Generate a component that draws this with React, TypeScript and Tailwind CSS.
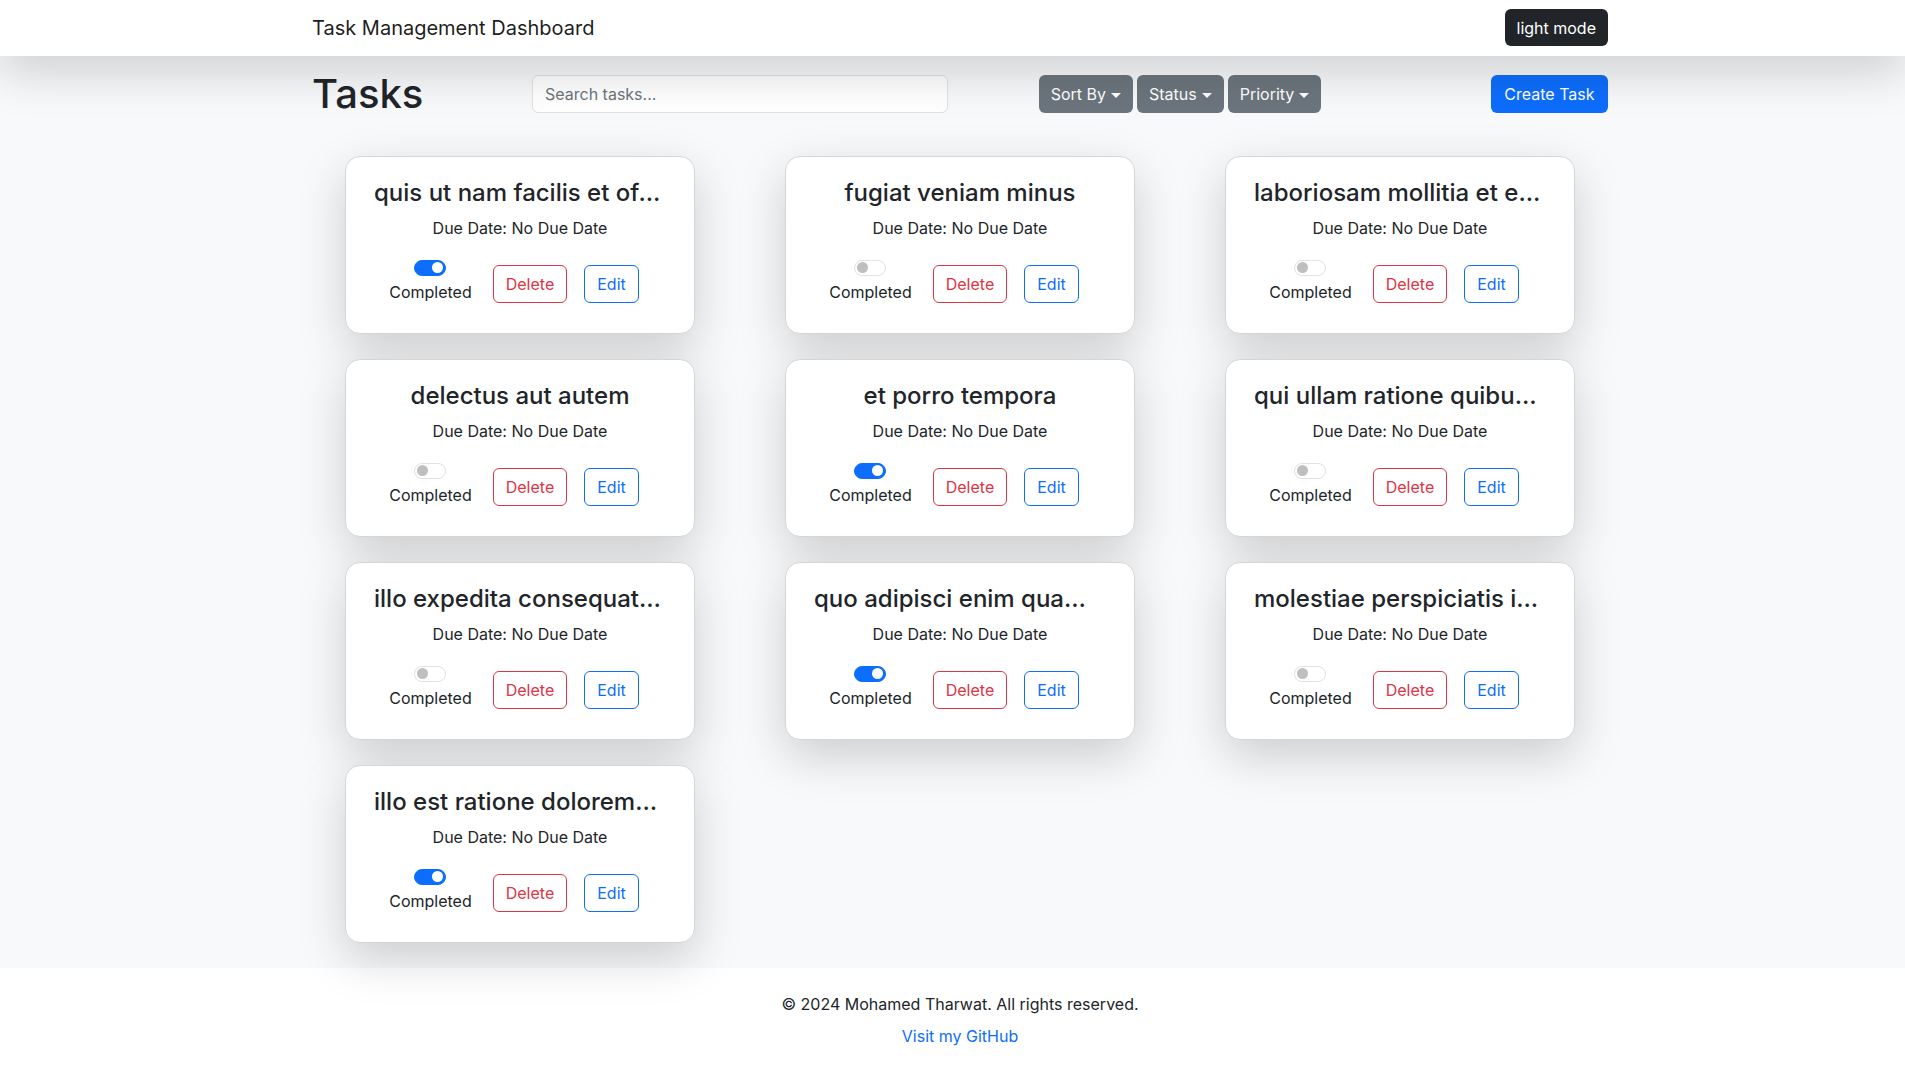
import React from "react";

interface Task {
  title: string;
  completed: boolean;
}

const tasks: Task[] = [
  { title: "quis ut nam facilis et officia qui", completed: true },
  { title: "fugiat veniam minus", completed: false },
  { title: "laboriosam mollitia et enim quasi adipisci quia provident illum", completed: false },
  { title: "delectus aut autem", completed: false },
  { title: "et porro tempora", completed: true },
  { title: "qui ullam ratione quibusdam voluptatem quia omnis", completed: false },
  { title: "illo expedita consequatur quia in", completed: false },
  { title: "quo adipisci enim quam ut ab", completed: true },
  { title: "molestiae perspiciatis ipsa", completed: false },
  { title: "illo est ratione doloremque quia maxime aut", completed: true },
];

const Caret: React.FC = () => (
  <span className="ml-[5px] inline-block h-0 w-0 border-x-[5px] border-t-[5px] border-x-transparent border-t-white align-middle" />
);

const Switch: React.FC<{ on: boolean }> = ({ on }) => (
  <div
    className={
      on
        ? "flex h-4 w-8 items-center justify-end rounded-full border border-[#0d6efd] bg-[#0d6efd] px-[2px]"
        : "flex h-4 w-8 items-center justify-start rounded-full border border-[#dee2e6] bg-white px-[2px]"
    }
  >
    <div
      className={
        on
          ? "h-[11px] w-[11px] rounded-full bg-white"
          : "h-[11px] w-[11px] rounded-full bg-[#bfbfbf]"
      }
    />
  </div>
);

const TaskCard: React.FC<{ task: Task }> = ({ task }) => (
  <div className="flex h-[178px] w-[350px] flex-col items-center rounded-[15px] border border-[#d6d6d6] bg-white px-[28px] pt-[22px] shadow-[0_1rem_3rem_rgba(0,0,0,0.175)]">
    <h4 className="w-full truncate text-center text-[24px] font-medium leading-[1.2] text-[#212529]">
      {task.title}
    </h4>
    <p className="mt-[8px] text-base leading-6 text-[#212529]">
      Due Date: No Due Date
    </p>
    <div className="mt-[20px] mr-[12px] flex items-center">
      <div className="flex flex-col items-center">
        <Switch on={task.completed} />
        <label className="mt-[4px] text-base leading-6 text-[#212529]">
          Completed
        </label>
      </div>
      <button className="ml-[21px] mt-[4px] h-[38px] rounded-md border border-[#dc3545] px-3 text-base text-[#dc3545]">
        Delete
      </button>
      <button className="ml-[17px] mt-[4px] h-[38px] rounded-md border border-[#0d6efd] px-3 text-base text-[#0d6efd]">
        Edit
      </button>
    </div>
  </div>
);

export default function App() {
  return (
    <div className="min-h-screen bg-white font-['Inter','Liberation_Sans',sans-serif] text-[#212529]">
      <nav className="relative z-10 h-14 bg-white shadow-[0_1rem_3rem_rgba(0,0,0,0.175)]">
        <div className="ml-[312px] flex h-full w-[1296px] items-center justify-between">
          <span className="text-[20px] leading-[1.5] text-[#000000e6]">
            Task Management Dashboard
          </span>
          <button className="mb-[1px] h-[37px] rounded-md bg-[#212529] px-3 text-base text-white">
            light mode
          </button>
        </div>
      </nav>

      <main className="bg-[#f8f9fa] pt-[14px] pb-[25px]">
        <div className="ml-[300px] grid w-[1320px] grid-cols-12 items-center">
          <div className="col-span-2 px-3">
            <h1 className="text-[40px] font-medium leading-[1.2] text-[#212529]">
              Tasks
            </h1>
          </div>
          <div className="col-span-4 px-3">
            <input
              type="text"
              placeholder="Search tasks..."
              className="h-[38px] w-full rounded-md border border-[#dee2e6] bg-white px-3 text-base text-[#212529] placeholder:text-[#6c757d] outline-none"
            />
          </div>
          <div className="col-span-4 flex justify-center gap-1 px-3">
            <button className="h-[38px] rounded-md bg-[#6c757d] px-3 text-base text-white">
              Sort By
              <Caret />
            </button>
            <button className="h-[38px] rounded-md bg-[#6c757d] px-3 text-base text-white">
              Status
              <Caret />
            </button>
            <button className="h-[38px] rounded-md bg-[#6c757d] px-3 text-base text-white">
              Priority
              <Caret />
            </button>
          </div>
          <div className="col-span-2 flex justify-end px-3">
            <button className="h-[38px] rounded-md bg-[#0d6efd] px-[13.5px] text-base text-white">
              Create Task
            </button>
          </div>
        </div>

        <div className="ml-[300px] mt-[38px] grid w-[1320px] grid-cols-3 gap-y-[25px]">
          {tasks.map((task, i) => (
            <div key={i} className="flex justify-center">
              <TaskCard task={task} />
            </div>
          ))}
        </div>
      </main>

      <footer className="bg-white py-6 pl-[15px] text-center">
        <p className="mb-2 text-base leading-6 text-[#212529]">
          © 2024 Mohamed Tharwat. All rights reserved.
        </p>
        <a href="#" className="text-base leading-6 text-[#0d6efd]">
          Visit my GitHub
        </a>
      </footer>
    </div>
  );
}
